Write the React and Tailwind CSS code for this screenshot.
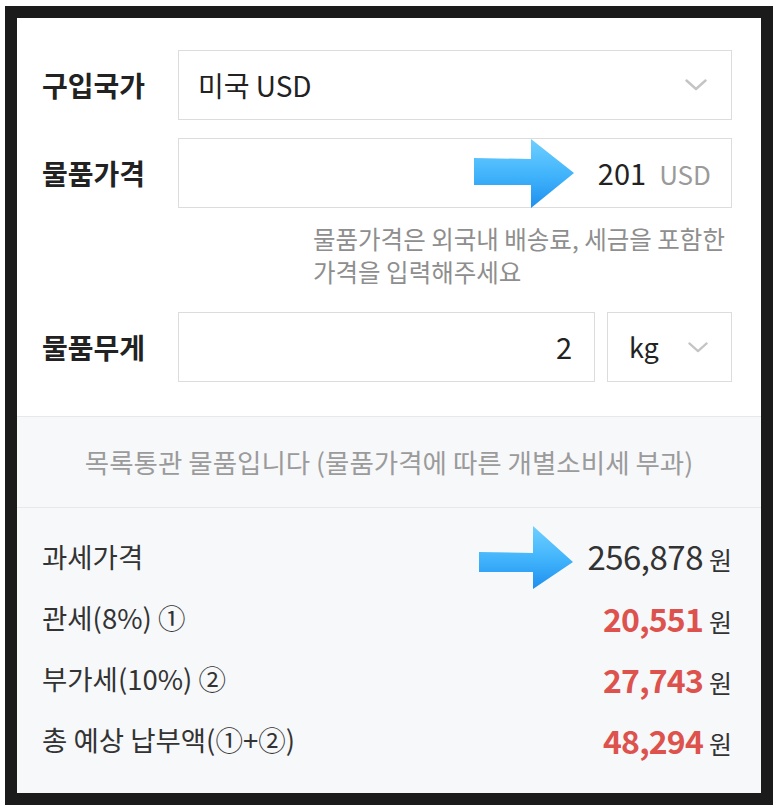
import React from 'react';

const FONT = "font-['Noto_Sans_CJK_KR','Noto_Sans',sans-serif]";

function Chevron({ className }) {
  return (
    <svg className={className} viewBox="0 0 22 12" fill="none">
      <path d="M1.5 1.5 L11 10 L20.5 1.5" stroke="#c4c4c4" strokeWidth="2.4" strokeLinecap="round" strokeLinejoin="round" />
    </svg>
  );
}

function BlueArrow({ id, w, h, shaftTop, shaftBottom, headX, tipY, className }) {
  return (
    <svg className={className} width={w} height={h} viewBox={`0 0 ${w} ${h}`}>
      <defs>
        <linearGradient id={id} x1="0" y1="0" x2="0" y2="1">
          <stop offset="0" stopColor="#6fd0ff" />
          <stop offset="0.55" stopColor="#3fb2fb" />
          <stop offset="1" stopColor="#1f8fee" />
        </linearGradient>
      </defs>
      <path
        d={`M0 ${shaftTop} L${headX} ${shaftTop + 1} L${headX} 0 L${w} ${tipY} L${headX} ${h} L${headX} ${shaftBottom} L0 ${shaftBottom} Z`}
        fill={`url(#${id})`}
      />
    </svg>
  );
}

// Customs estimate card
const results = [
  { label: '관세(8%) ①', value: '20,551' },
  { label: '부가세(10%) ②', value: '27,743' },
  { label: '총 예상 납부액(①+②)', value: '48,294' },
];

export default function App() {
  return (
    <div className={`w-[780px] h-[810px] bg-white pt-[6px] pl-[5px] pr-[7px] pb-[5px] ${FONT}`}>
      <div className="h-full border-[12px] border-[#1b1b1b] flex flex-col bg-[#f7f8fa]">
        {/* form */}
        <div className="bg-white pl-[25px] pr-[29px] pt-[32px] pb-[34px] border-b border-[#e6e8eb]">
          <div className="flex items-center h-[70px]">
            <div className="w-[136px] text-[28px] font-bold text-[#222]">구입국가</div>
            <div className="flex-1 h-full border border-[#dcdcdc] flex items-center justify-between pl-[19px] pr-[24px]">
              <span className="text-[28px] text-[#222]">미국 USD</span>
              <Chevron className="w-[22px] h-[12px]" />
            </div>
          </div>

          <div className="flex items-center h-[70px] mt-[18px]">
            <div className="w-[136px] text-[28px] font-bold text-[#222]">물품가격</div>
            <div className="relative flex-1 h-full border border-[#dcdcdc] flex items-center justify-end pr-[20px] gap-[13px]">
              <BlueArrow id="g1" w={100} h={69} shaftTop={19} shaftBottom={46} headX={57} tipY={34} className="absolute left-[295px] top-0" />
              <span className="text-[29px] text-[#222]">201</span>
              <span className="text-[26px] text-[#9a9a9a]">USD</span>
            </div>
          </div>

          <div className="pl-[271px] mt-[14px] text-[24.5px] leading-[33px] text-[#8e8e8e]">
            <p>물품가격은 외국내 배송료, 세금을 포함한</p>
            <p>가격을 입력해주세요</p>
          </div>

          <div className="flex items-center h-[70px] mt-[24px]">
            <div className="w-[136px] text-[28px] font-bold text-[#222]">물품무게</div>
            <div className="w-[417px] h-full border border-[#dcdcdc] flex items-center justify-end pr-[22px]">
              <span className="text-[29px] text-[#222]">2</span>
            </div>
            <div className="ml-[12px] flex-1 h-full border border-[#dcdcdc] flex items-center justify-between pl-[21px] pr-[23px]">
              <span className="text-[27px] text-[#222]">kg</span>
              <Chevron className="w-[20px] h-[11px]" />
            </div>
          </div>
        </div>

        {/* notice */}
        <div className="h-[91px] flex items-center justify-center border-b border-[#e6e8eb]">
          <p className="text-[26.5px] text-[#9b9b9b]">목록통관 물품입니다 (물품가격에 따른 개별소비세 부과)</p>
        </div>

        {/* results */}
        <div className="pl-[25px] pr-[29px] pt-[18px]">
          <div className="relative flex items-center justify-between h-[61px]">
            <span className="text-[27.5px] text-[#333]">과세가격</span>
            <BlueArrow id="g2" w={94} h={63} shaftTop={26} shaftBottom={46} headX={54} tipY={36} className="absolute left-[437px] top-0" />
            <span className="flex items-baseline gap-[6px]">
              <span className="text-[33px] text-[#333] tracking-[-0.5px]">256,878</span>
              <span className="text-[25px] text-[#333]">원</span>
            </span>
          </div>
          {results.map((r) => (
            <div key={r.label} className="flex items-center justify-between h-[61px]">
              <span className="text-[27.5px] text-[#333]">{r.label}</span>
              <span className="flex items-baseline gap-[6px]">
                <span className="text-[32px] font-bold text-[#dd524d] tracking-[-0.8px]">{r.value}</span>
                <span className="text-[25px] text-[#333]">원</span>
              </span>
            </div>
          ))}
        </div>
      </div>
    </div>
  );
}
